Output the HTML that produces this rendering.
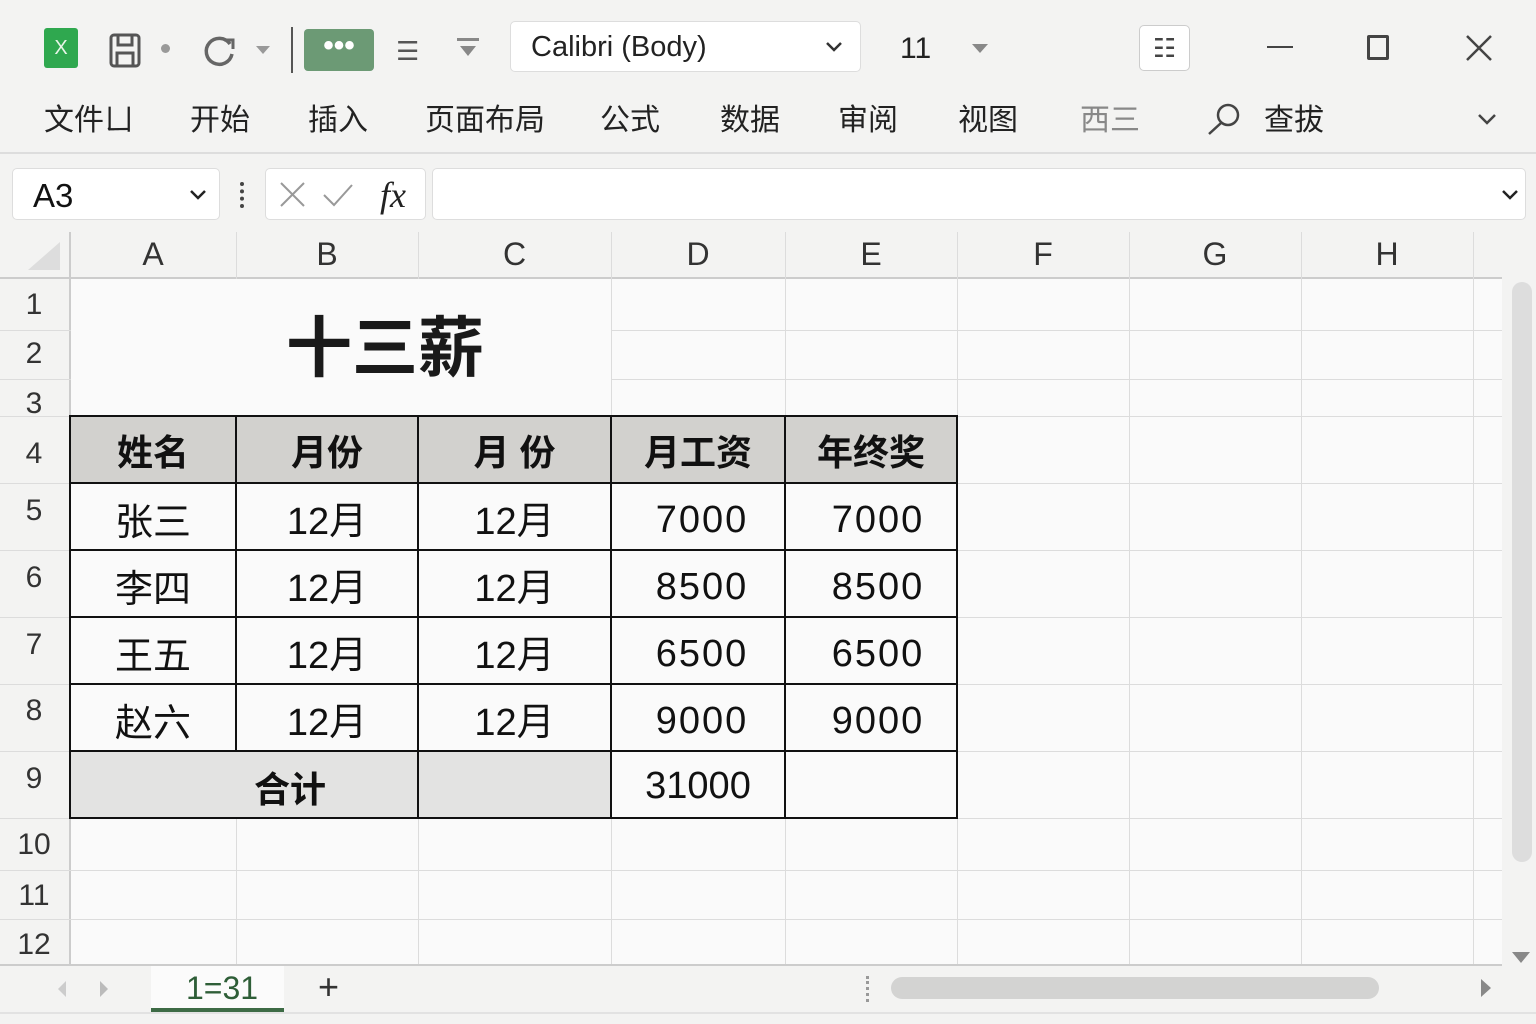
<!DOCTYPE html>
<html><head><meta charset="utf-8">
<style>
*{margin:0;padding:0;box-sizing:border-box}
body{width:1536px;height:1024px;background:#f3f3f2;font-family:"Liberation Sans","Noto Sans CJK SC",sans-serif;position:relative;overflow:hidden;color:#222}
.a{position:absolute}
.t{position:absolute;white-space:nowrap}
.rib{font-size:30px;top:95px;color:#222}
.vl{position:absolute;width:1px;background:#dcdcdc}
.hl{position:absolute;height:1px;background:#dcdcdc}
.ch{position:absolute;top:236px;font-size:32px;color:#333;text-align:center}
.rh{position:absolute;left:0;width:68px;font-size:30px;color:#333;text-align:center}
.cell{position:absolute;display:flex;align-items:center;justify-content:center;font-size:38px;color:#111}
.b{font-weight:bold}
</style></head><body>
<div class="a" style="left:44px;top:28px;width:34px;height:40px;background:#2fa84f;border-radius:3px;color:#e8f5e8;font-size:20px;text-align:center;line-height:40px">X</div>
<svg class="a" style="left:108px;top:32px" width="36" height="38" viewBox="0 0 36 38"><rect x="3" y="3" width="28" height="31" rx="3" fill="none" stroke="#555" stroke-width="3"/><rect x="10" y="3" width="14" height="10" fill="none" stroke="#555" stroke-width="3"/><rect x="9" y="21" width="16" height="13" fill="none" stroke="#555" stroke-width="3"/></svg>
<div class="a" style="left:161px;top:44px;width:9px;height:9px;border-radius:50%;background:#999"></div>
<svg class="a" style="left:202px;top:34px" width="36" height="34"><path d="M28 10 A13 13 0 1 0 30 20" fill="none" stroke="#666" stroke-width="3.5"/><path d="M22 6 L31 6 L31 15" fill="none" stroke="#666" stroke-width="3"/></svg>
<div class="a" style="left:256px;top:46px;border-left:7px solid transparent;border-right:7px solid transparent;border-top:8px solid #999"></div>
<div class="a" style="left:291px;top:27px;width:2px;height:46px;background:#555"></div>
<div class="a" style="left:304px;top:29px;width:70px;height:42px;background:#6c9a75;border-radius:4px;color:#fff;font-size:30px;text-align:center;line-height:34px;font-weight:bold">•••</div>
<div class="t" style="left:396px;top:36px;font-size:26px;color:#555">☰</div>
<div class="a" style="left:457px;top:38px;width:22px;height:3px;background:#888"></div>
<div class="a" style="left:460px;top:46px;border-left:8px solid transparent;border-right:8px solid transparent;border-top:10px solid #888"></div>
<div class="a" style="left:510px;top:21px;width:351px;height:51px;background:#fff;border:1px solid #ddd;border-radius:5px"></div>
<div class="t" style="left:531px;top:31px;font-size:29px;color:#222">Calibri (Body)</div>
<svg class="a" style="left:824px;top:40px" width="20" height="14"><path d="M3 3 L10 10 L17 3" fill="none" stroke="#333" stroke-width="2.5"/></svg>
<div class="t" style="left:900px;top:32px;font-size:30px;color:#222">11</div>
<div class="a" style="left:972px;top:44px;border-left:8px solid transparent;border-right:8px solid transparent;border-top:9px solid #888"></div>
<div class="a" style="left:1139px;top:25px;width:51px;height:46px;background:#fff;border:1px solid #ccc;border-radius:5px;text-align:center;font-size:26px;line-height:44px;color:#444">☷</div>
<div class="a" style="left:1267px;top:46px;width:26px;height:2px;background:#444"></div>
<div class="a" style="left:1367px;top:35px;width:22px;height:25px;border:3px solid #444;border-radius:2px"></div>
<svg class="a" style="left:1464px;top:33px" width="30" height="30"><path d="M3 3 L27 27 M27 3 L3 27" stroke="#444" stroke-width="2.5"/></svg>
<div class="t rib" style="left:44px">文件ㄩ</div>
<div class="t rib" style="left:190px">开始</div>
<div class="t rib" style="left:308px">插入</div>
<div class="t rib" style="left:425px">页面布局</div>
<div class="t rib" style="left:600px">公式</div>
<div class="t rib" style="left:720px">数据</div>
<div class="t rib" style="left:838px">审阅</div>
<div class="t rib" style="left:958px">视图</div>
<div class="t rib" style="left:1080px;color:#888">西三</div>
<svg class="a" style="left:1206px;top:102px" width="36" height="34"><circle cx="22" cy="13" r="10" fill="none" stroke="#444" stroke-width="2.5"/><path d="M15 21 L3 32" stroke="#444" stroke-width="2.5"/></svg>
<div class="t rib" style="left:1264px">查拔</div>
<svg class="a" style="left:1476px;top:112px" width="22" height="14"><path d="M3 3 L11 11 L19 3" fill="none" stroke="#444" stroke-width="2.5"/></svg>
<div class="a" style="left:0;top:152px;width:1536px;height:2px;background:#ddd"></div>
<div class="a" style="left:12px;top:168px;width:208px;height:52px;background:#fff;border:1px solid #ddd;border-radius:5px"></div>
<div class="t" style="left:33px;top:177px;font-size:33px;color:#111">A3</div>
<svg class="a" style="left:188px;top:188px" width="20" height="14"><path d="M3 3 L10 10 L17 3" fill="none" stroke="#222" stroke-width="2.5"/></svg>
<div class="a" style="left:240px;top:182px;width:4px;height:26px;border-left:4px dotted #444"></div>
<div class="a" style="left:265px;top:168px;width:161px;height:52px;background:#fff;border:1px solid #ddd;border-radius:5px"></div>
<svg class="a" style="left:278px;top:180px" width="120" height="30"><path d="M3 3 L26 26 M26 3 L3 26" stroke="#999" stroke-width="2"/><path d="M46 15 L56 25 L74 5" fill="none" stroke="#999" stroke-width="2"/></svg>
<div class="t" style="left:380px;top:174px;font-size:36px;font-style:italic;font-family:'Liberation Serif',serif;color:#222">fx</div>
<div class="a" style="left:432px;top:168px;width:1094px;height:52px;background:#fff;border:1px solid #ddd;border-radius:5px"></div>
<svg class="a" style="left:1500px;top:188px" width="20" height="14"><path d="M3 3 L10 10 L17 3" fill="none" stroke="#222" stroke-width="2.5"/></svg>
<div class="a" style="left:70px;top:278px;width:1432px;height:687px;background:#fafafa"></div>
<div class="a" style="left:0;top:278px;width:70px;height:687px;background:#f3f3f2"></div>
<div class="a" style="left:0;top:277px;width:1502px;height:2px;background:#ccc"></div>
<div class="a" style="left:69px;top:232px;width:2px;height:733px;background:#ccc"></div>
<svg class="a" style="left:26px;top:240px" width="36" height="32"><path d="M34 2 L34 30 L2 30 Z" fill="#ddd"/></svg>
<div class="vl" style="left:236px;top:232px;height:733px"></div>
<div class="vl" style="left:418px;top:232px;height:733px"></div>
<div class="vl" style="left:611px;top:232px;height:733px"></div>
<div class="vl" style="left:785px;top:232px;height:733px"></div>
<div class="vl" style="left:957px;top:232px;height:733px"></div>
<div class="vl" style="left:1129px;top:232px;height:733px"></div>
<div class="vl" style="left:1301px;top:232px;height:733px"></div>
<div class="vl" style="left:1473px;top:232px;height:733px"></div>
<div class="hl" style="left:0;top:330px;width:1502px"></div>
<div class="hl" style="left:0;top:379px;width:1502px"></div>
<div class="hl" style="left:0;top:416px;width:1502px"></div>
<div class="hl" style="left:0;top:483px;width:1502px"></div>
<div class="hl" style="left:0;top:550px;width:1502px"></div>
<div class="hl" style="left:0;top:617px;width:1502px"></div>
<div class="hl" style="left:0;top:684px;width:1502px"></div>
<div class="hl" style="left:0;top:751px;width:1502px"></div>
<div class="hl" style="left:0;top:818px;width:1502px"></div>
<div class="hl" style="left:0;top:870px;width:1502px"></div>
<div class="hl" style="left:0;top:919px;width:1502px"></div>
<div class="a" style="left:0;top:964px;width:1502px;height:2px;background:#ccc"></div>
<div class="ch" style="left:70px;width:166px">A</div>
<div class="ch" style="left:236px;width:182px">B</div>
<div class="ch" style="left:418px;width:193px">C</div>
<div class="ch" style="left:611px;width:174px">D</div>
<div class="ch" style="left:785px;width:172px">E</div>
<div class="ch" style="left:957px;width:172px">F</div>
<div class="ch" style="left:1129px;width:172px">G</div>
<div class="ch" style="left:1301px;width:172px">H</div>
<div class="rh" style="top:288px">1</div>
<div class="rh" style="top:337px">2</div>
<div class="rh" style="top:387px">3</div>
<div class="rh" style="top:437px">4</div>
<div class="rh" style="top:494px">5</div>
<div class="rh" style="top:561px">6</div>
<div class="rh" style="top:628px">7</div>
<div class="rh" style="top:694px">8</div>
<div class="rh" style="top:762px">9</div>
<div class="rh" style="top:828px">10</div>
<div class="rh" style="top:879px">11</div>
<div class="rh" style="top:928px">12</div>
<div class="a" style="left:71px;top:279px;width:540px;height:137px;background:#fafafa"></div>
<div class="t b" style="left:286px;top:295px;font-size:66px;color:#1a1a1a">十三薪</div>
<div class="a" style="left:70px;top:416px;width:887px;height:67px;background:#d2d1ce"></div>
<div class="a" style="left:70px;top:483px;width:887px;height:268px;background:#fafafa"></div>
<div class="a" style="left:70px;top:751px;width:541px;height:67px;background:#e3e3e2"></div>
<div class="a" style="left:611px;top:751px;width:346px;height:67px;background:#fafafa"></div>
<svg class="a" style="left:0;top:0" width="1536" height="1024">
<g stroke="#111" stroke-width="2" fill="none">
<rect x="70" y="416" width="887" height="402"/>
<path d="M70 483H957M70 550H957M70 617H957M70 684H957M70 751H957"/>
<path d="M236 416V751M418 416V818M611 416V818M785 416V818"/>
</g></svg>
<div class="cell b" style="left:70px;top:416px;width:166px;height:67px;font-size:36px">姓名</div>
<div class="cell b" style="left:236px;top:416px;width:182px;height:67px;font-size:36px">月份</div>
<div class="cell b" style="left:418px;top:416px;width:193px;height:67px;font-size:36px">月 份</div>
<div class="cell b" style="left:611px;top:416px;width:174px;height:67px;font-size:36px">月工资</div>
<div class="cell b" style="left:785px;top:416px;width:172px;height:67px;font-size:36px">年终奖</div>
<div class="cell" style="left:70px;top:485px;width:166px;height:67px">张三</div>
<div class="cell" style="left:236px;top:484px;width:182px;height:67px">12月</div>
<div class="cell" style="left:418px;top:484px;width:193px;height:67px">12月</div>
<div class="cell" style="left:611px;top:487px;width:182px;height:67px;letter-spacing:2px">7000</div>
<div class="cell" style="left:785px;top:487px;width:186px;height:67px;letter-spacing:2px">7000</div>
<div class="cell" style="left:70px;top:552px;width:166px;height:67px">李四</div>
<div class="cell" style="left:236px;top:551px;width:182px;height:67px">12月</div>
<div class="cell" style="left:418px;top:551px;width:193px;height:67px">12月</div>
<div class="cell" style="left:611px;top:554px;width:182px;height:67px;letter-spacing:2px">8500</div>
<div class="cell" style="left:785px;top:554px;width:186px;height:67px;letter-spacing:2px">8500</div>
<div class="cell" style="left:70px;top:619px;width:166px;height:67px">王五</div>
<div class="cell" style="left:236px;top:618px;width:182px;height:67px">12月</div>
<div class="cell" style="left:418px;top:618px;width:193px;height:67px">12月</div>
<div class="cell" style="left:611px;top:621px;width:182px;height:67px;letter-spacing:2px">6500</div>
<div class="cell" style="left:785px;top:621px;width:186px;height:67px;letter-spacing:2px">6500</div>
<div class="cell" style="left:70px;top:686px;width:166px;height:67px">赵六</div>
<div class="cell" style="left:236px;top:685px;width:182px;height:67px">12月</div>
<div class="cell" style="left:418px;top:685px;width:193px;height:67px">12月</div>
<div class="cell" style="left:611px;top:688px;width:182px;height:67px;letter-spacing:2px">9000</div>
<div class="cell" style="left:785px;top:688px;width:186px;height:67px;letter-spacing:2px">9000</div>
<div class="cell b" style="left:180px;top:753px;width:220px;height:67px;font-size:36px">合计</div>
<div class="cell" style="left:611px;top:753px;width:174px;height:67px">31000</div>
<div class="a" style="left:1512px;top:282px;width:20px;height:580px;background:#ddd;border-radius:10px"></div>
<div class="a" style="left:1512px;top:952px;border-left:9px solid transparent;border-right:9px solid transparent;border-top:11px solid #888"></div>
<div class="a" style="left:0;top:966px;width:1536px;height:58px;background:#f3f3f2"></div>
<div class="a" style="left:58px;top:981px;border-top:8px solid transparent;border-bottom:8px solid transparent;border-right:8px solid #ccc"></div>
<div class="a" style="left:100px;top:981px;border-top:8px solid transparent;border-bottom:8px solid transparent;border-left:8px solid #bbb"></div>
<div class="a" style="left:151px;top:966px;width:133px;height:46px;background:#fbfbfb"></div>
<div class="a" style="left:151px;top:1008px;width:133px;height:4px;background:#3d6b45"></div>
<div class="t" style="left:186px;top:970px;font-size:32px;color:#2e5e37">1=31</div>
<div class="t" style="left:318px;top:966px;font-size:36px;color:#333">+</div>
<div class="a" style="left:866px;top:976px;width:3px;height:26px;border-left:3px dotted #999"></div>
<div class="a" style="left:891px;top:977px;width:488px;height:22px;background:#d3d3d2;border-radius:11px"></div>
<div class="a" style="left:1481px;top:979px;border-top:9px solid transparent;border-bottom:9px solid transparent;border-left:10px solid #888"></div>
<div class="a" style="left:0;top:1012px;width:1536px;height:2px;background:#e2e2e2"></div>
</body></html>
